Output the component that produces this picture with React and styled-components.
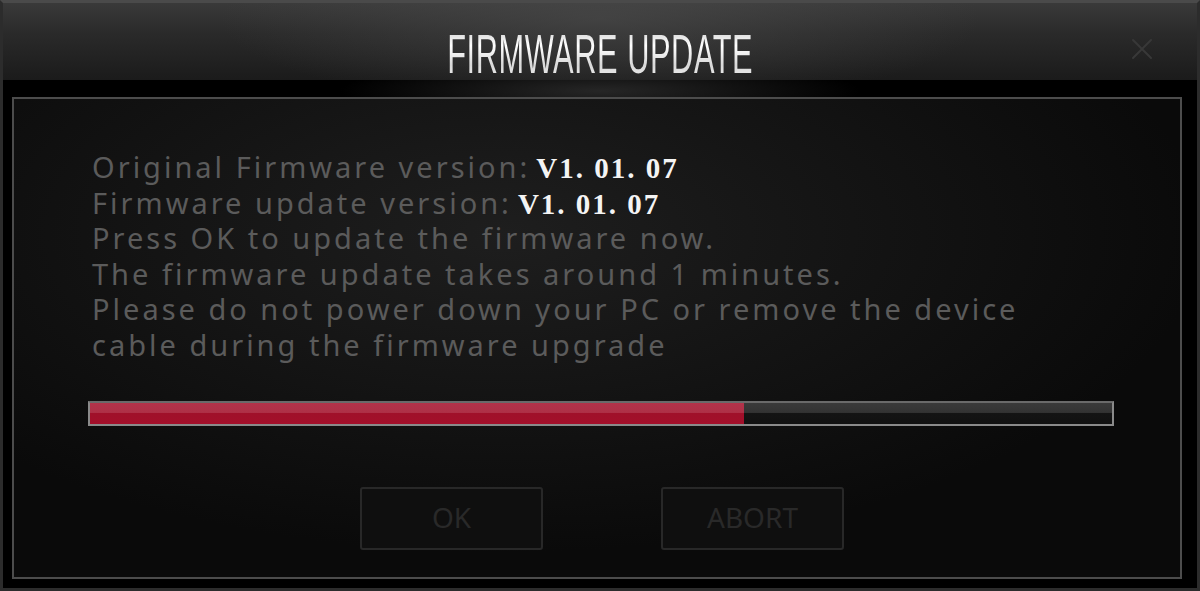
import React from 'react';
import styled, { createGlobalStyle } from 'styled-components';

const GlobalStyle = createGlobalStyle`
  html, body {
    margin: 0;
    padding: 0;
    background: #000;
  }
`;

const Window = styled.div`
  width: 1200px;
  height: 591px;
  box-sizing: border-box;
  display: flex;
  flex-direction: column;
  border: 3px solid #2c2c2c;
  border-top-color: #4a4a4a;
  background:
    radial-gradient(ellipse 260px 30px at 50% 88px, #262626 0%, rgba(0, 0, 0, 0) 100%),
    #000;
  overflow: hidden;
`;

const TitleBar = styled.div`
  height: 77px;
  flex: none;
  display: grid;
  grid-template-columns: 1fr auto 1fr;
  align-items: end;
  background:
    radial-gradient(ellipse 380px 90px at 50% 20%, rgba(80, 80, 80, 0.55) 0%, rgba(0, 0, 0, 0) 100%),
    linear-gradient(#393939 0%, #2a2a2a 40%, #1b1b1b 100%);
`;

const Title = styled.h1`
  grid-column: 2;
  margin: 0 0 -2px;
  font-family: 'Liberation Sans', Arial, sans-serif;
  font-weight: 400;
  font-size: 56px;
  line-height: 56px;
  letter-spacing: 1px;
  transform: scaleX(0.55);
  transform-origin: center;
  white-space: nowrap;
  background: linear-gradient(#c8c8c8 0%, #ffffff 35%, #d8d8d8 70%, #f2f2f2 100%);
  -webkit-background-clip: text;
  background-clip: text;
  color: transparent;
`;

const CloseButton = styled.button`
  grid-column: 3;
  justify-self: end;
  align-self: center;
  margin: 14px 44px 0 0;
  padding: 0;
  border: none;
  background: none;
  width: 22px;
  height: 22px;
  display: flex;
  align-items: center;
  justify-content: center;
  cursor: pointer;
  svg {
    display: block;
  }
`;

const Body = styled.div`
  flex: 1;
  display: flex;
  padding: 17px 15px 9px 9px;
  min-height: 0;
`;

const Panel = styled.div`
  flex: 1;
  box-sizing: border-box;
  border: 2px solid #4c4c4c;
  background:
    radial-gradient(ellipse 700px 320px at 42% 28%, #1e1e1e 0%, rgba(10, 10, 10, 0) 100%),
    #0a0a0a;
  display: flex;
  flex-direction: column;
  padding: 50px 0 0 74px;
`;

const Info = styled.div`
  padding-left: 4px;
  font-family: 'Noto Sans', 'Open Sans', sans-serif;
  font-size: 29px;
  line-height: 35.5px;
  letter-spacing: 3px;
  color: #5b5b5b;
`;

const Line = styled.div`
  white-space: nowrap;
  height: 35.5px;
`;

const Version = styled.span`
  font-family: 'Liberation Serif', 'Times New Roman', serif;
  font-weight: 700;
  font-size: 29px;
  letter-spacing: 2px;
  color: #f4f4f4;
  margin-left: ${p => p.$gap}px;
`;

const Progress = styled.div`
  margin-top: 39px;
  width: 1026px;
  height: 25px;
  box-sizing: border-box;
  border: 2px solid #8a8a8a;
  border-top-color: #6a6a6a;
  background: linear-gradient(#3a3a3a 0%, #333 45%, #141414 50%, #111 100%);
  display: flex;
`;

const Fill = styled.div`
  height: 100%;
  background: linear-gradient(#b2334a 0%, #ae3047 45%, #a0102a 50%, #a30f2a 100%);
`;

const Buttons = styled.div`
  margin-top: 61px;
  margin-left: 272px;
  display: flex;
  gap: 118px;
`;

const Button = styled.button`
  width: 183px;
  height: 63px;
  box-sizing: border-box;
  border: 2px solid #282828;
  border-radius: 3px;
  background: #0f0f0f;
  color: #292929;
  font-family: 'Noto Sans', 'Open Sans', sans-serif;
  font-size: 28px;
  padding: 0 0 4px;
  display: flex;
  align-items: center;
  justify-content: center;
  cursor: default;
`;

const CloseIcon = () => (
  <svg width="22" height="22" viewBox="0 0 22 22">
    <path d="M2 2 L20 20 M20 2 L2 20" stroke="#383838" strokeWidth="2" strokeLinecap="round" />
  </svg>
);

const progress = 0.64;

const App = () => (
  <>
    <GlobalStyle />
    <Window>
      <TitleBar>
        <Title>FIRMWARE UPDATE</Title>
        <CloseButton aria-label="Close">
          <CloseIcon />
        </CloseButton>
      </TitleBar>
      <Body>
        <Panel>
          <Info>
            <Line>
              Original Firmware version:<Version $gap={6}>V1. 01. 07</Version>
            </Line>
            <Line>
              Firmware update version:<Version $gap={6}>V1. 01. 07</Version>
            </Line>
            <Line>Press OK to update the firmware now.</Line>
            <Line>The firmware update takes around 1 minutes.</Line>
            <Line>Please do not power down your PC or remove the device</Line>
            <Line>cable during the firmware upgrade</Line>
          </Info>
          <Progress>
            <Fill style={{ width: `${progress * 100}%` }} />
          </Progress>
          <Buttons>
            <Button>OK</Button>
            <Button>ABORT</Button>
          </Buttons>
        </Panel>
      </Body>
    </Window>
  </>
);

export default App;
